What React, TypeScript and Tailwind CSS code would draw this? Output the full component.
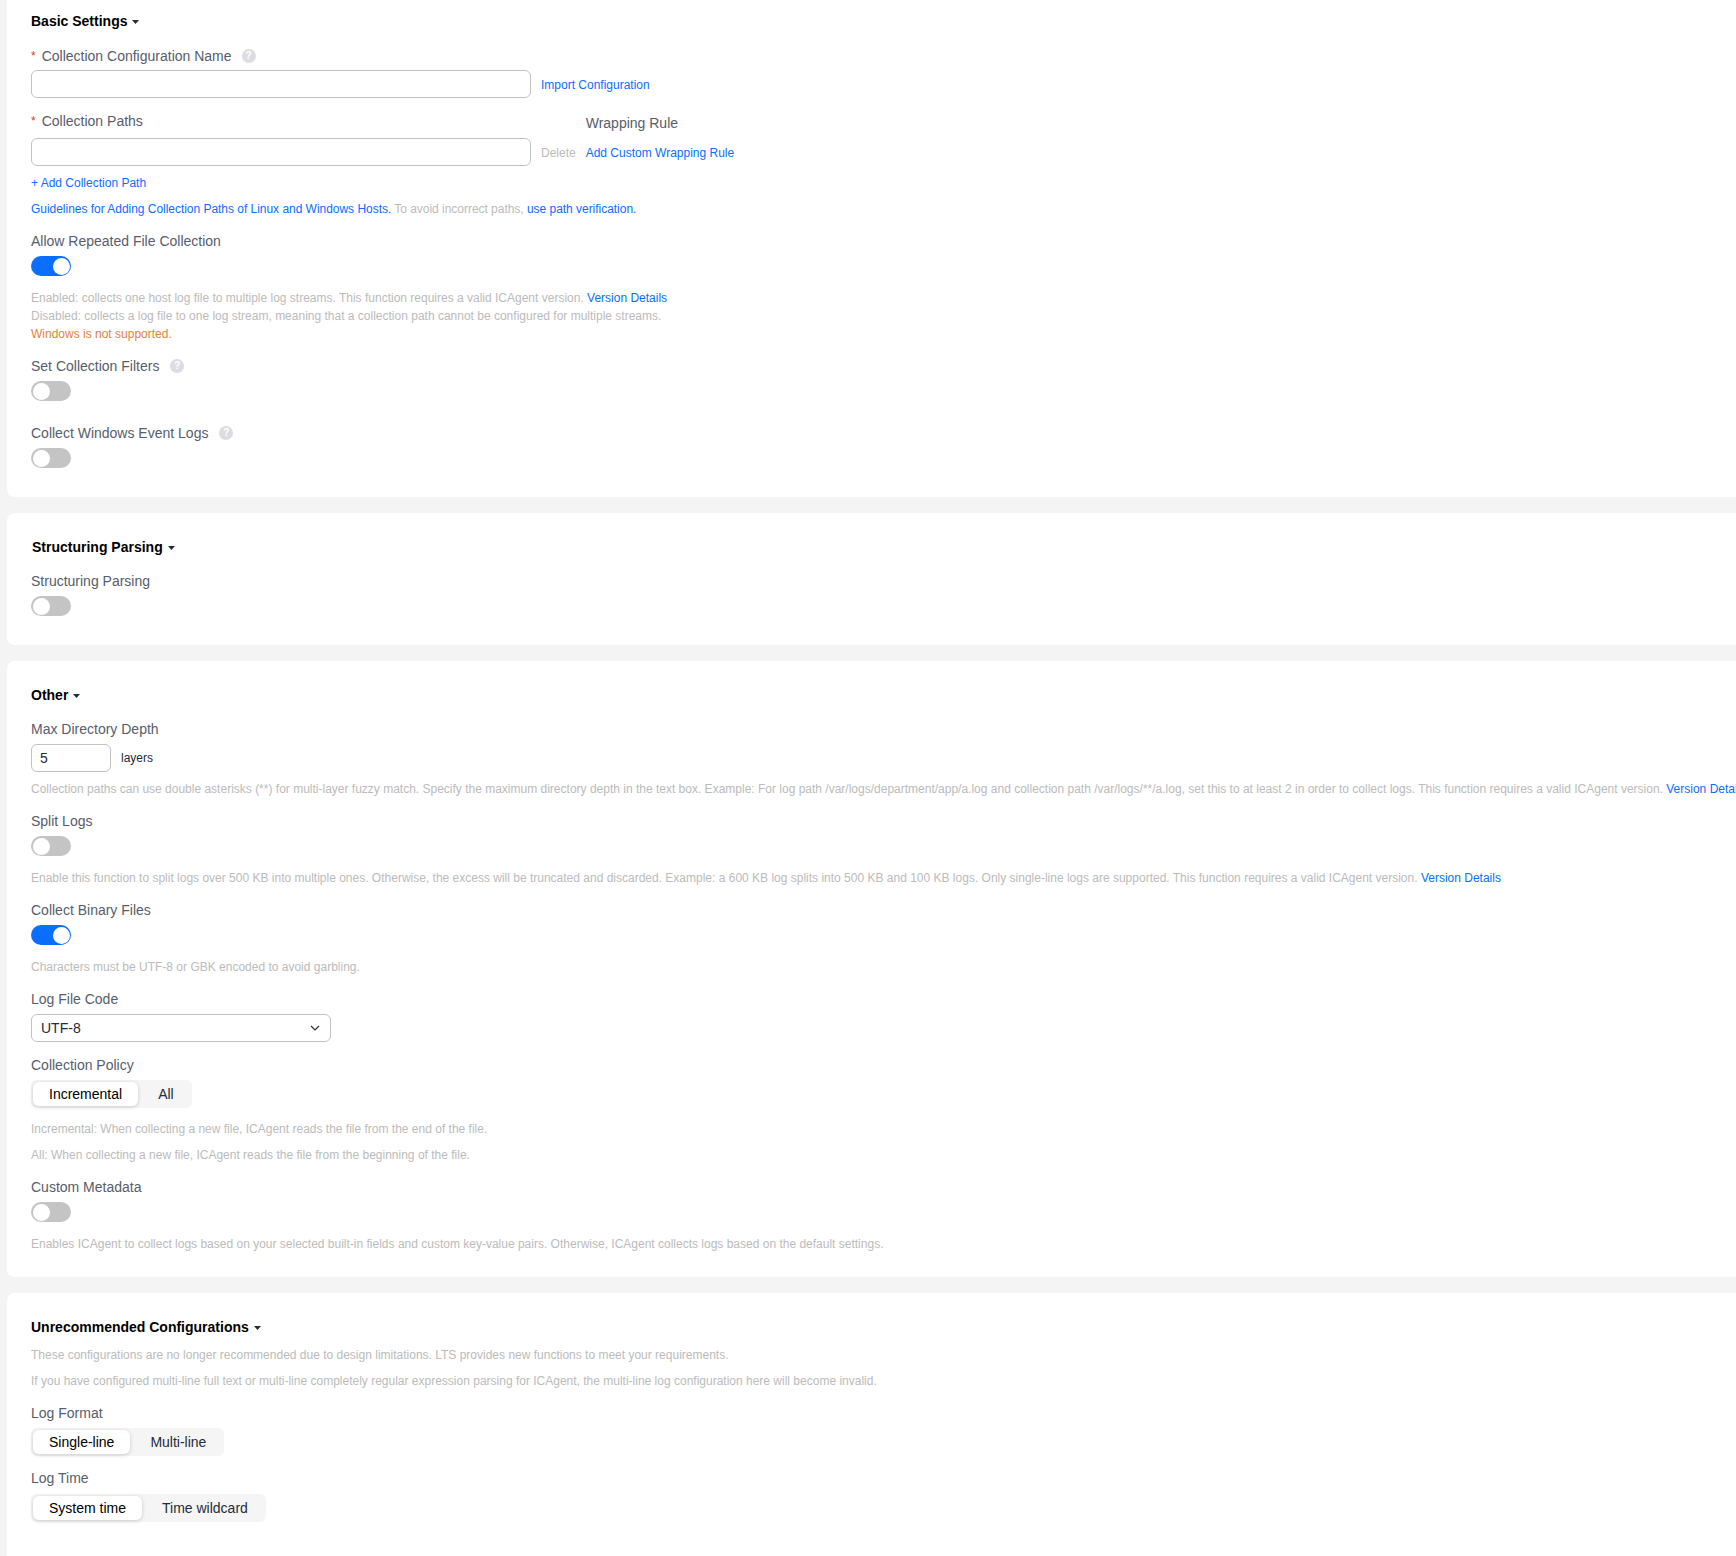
import type { ReactNode } from 'react';

function Caret() {
  return (
    <svg width="7" height="4" viewBox="0 0 7 4" className="ml-[5px] mt-[2px]">
      <path d="M0 0h7L3.5 4z" fill="#252b3a" />
    </svg>
  );
}

function Heading({ children, className = '' }: { children: ReactNode; className?: string }) {
  return (
    <div className={`flex h-5 items-center text-[14px] font-bold leading-5 text-black ${className}`}>
      {children}
      <Caret />
    </div>
  );
}

function Help({ className = '' }: { className?: string }) {
  return (
    <span className={`inline-flex h-[14px] w-[14px] items-center justify-center rounded-full bg-[#dcdce3] text-[10px] font-bold leading-none text-white ${className}`}>
      ?
    </span>
  );
}

function Label({ children, required, help, className = '' }: { children: ReactNode; required?: boolean; help?: boolean; className?: string }) {
  return (
    <div className={`flex h-5 items-center text-[14px] leading-5 text-[#575d6c] ${className}`}>
      {required && <span className="mr-[6px] text-[12px] text-[#e5352b]">*</span>}
      {children}
      {help && <Help className={required ? 'ml-[10px]' : 'ml-[11px]'} />}
    </div>
  );
}

function Toggle({ on }: { on?: boolean }) {
  return (
    <div className={`mt-[5px] flex h-5 w-10 items-center rounded-full px-[1.5px] ${on ? 'justify-end bg-[#0a6eff]' : 'justify-start bg-[#c4c4c4]'}`}>
      <div className="h-[17px] w-[17px] rounded-full bg-white" />
    </div>
  );
}

function Note({ children, className = '' }: { children: ReactNode; className?: string }) {
  return <p className={`whitespace-nowrap text-[12px] leading-[18px] text-[#bbbbbb] ${className}`}>{children}</p>;
}

function A({ children, className = '' }: { children: ReactNode; className?: string }) {
  return <a className={`text-[12px] leading-[18px] text-[#0a6eff] ${className}`}>{children}</a>;
}

function Segment({ active, other, className = 'mt-[5px]' }: { active: string; other: string; className?: string }) {
  return (
    <div className={`flex h-7 w-fit items-center rounded-md bg-[#f5f5f6] p-[2px] text-[14px] text-[#252b3a] ${className}`}>
      <div className="flex h-6 items-center rounded-md bg-white px-4 text-black shadow-[0_1px_4px_rgba(0,0,0,0.18)]">{active}</div>
      <div className="flex h-6 items-center pl-5 pr-4">{other}</div>
    </div>
  );
}

function TextBox({ className = '', value }: { className?: string; value?: string }) {
  return <input defaultValue={value} className={`h-7 rounded-md border border-[#c2c2c2] bg-white px-2 text-[14px] text-[#252b3a] outline-none ${className}`} />;
}

export default function App() {
  return (
    <div className="h-[1556px] w-[1736px] overflow-hidden bg-[#f4f4f4] pl-[7px] font-['Liberation_Sans',Arial,sans-serif]">
      <div className="flex w-[1760px] flex-col gap-4">
        <section className="rounded-b-lg bg-white pb-[29px] pl-6 pt-[11px]">
          <Heading>Basic Settings</Heading>
          <Label required help className="mt-[15px]">
            Collection Configuration Name
          </Label>
          <div className="mt-1 flex items-center">
            <TextBox className="w-[500px]" />
            <A className="ml-[10px] mt-[2px]">Import Configuration</A>
          </div>

          <div className="mt-[13px] flex items-end">
            <div>
              <Label required>Collection Paths</Label>
              <TextBox className="mt-[7px] block w-[500px]" />
            </div>
            <span className="mb-1 ml-[10px] text-[12px] leading-[18px] text-[#bbbbbb]">Delete</span>
            <div className="ml-[10px]">
              <div className="-mt-px h-5 text-[14px] leading-5 text-[#575d6c]">Wrapping Rule</div>
              <A className="mb-1 mt-[11px] block">Add Custom Wrapping Rule</A>
            </div>
          </div>

          <A className="mt-2 block">+ Add Collection Path</A>
          <Note className="mt-2 tracking-[-0.03px]">
            <A>Guidelines for Adding Collection Paths of Linux and Windows Hosts.</A> To avoid incorrect paths, <A>use path verification.</A>
          </Note>

          <Label className="mt-[13px]">Allow Repeated File Collection</Label>
          <Toggle on />
          <div className="mt-[13px]">
            <Note>
              Enabled: collects one host log file to multiple log streams. This function requires a valid ICAgent version. <A>Version Details</A>
            </Note>
            <Note>Disabled: collects a log file to one log stream, meaning that a collection path cannot be configured for multiple streams.</Note>
            <Note className="text-[#e8813a]">Windows is not supported.</Note>
          </div>

          <Label help className="mt-[13px]">
            Set Collection Filters
          </Label>
          <Toggle />
          <Label help className="mt-[22px]">
            Collect Windows Event Logs
          </Label>
          <Toggle />
        </section>

        <section className="rounded-lg bg-white pb-[29px] pl-6 pt-6">
          <Heading className="pl-px">Structuring Parsing</Heading>
          <Label className="mt-[14px]">Structuring Parsing</Label>
          <Toggle />
        </section>

        <section className="rounded-lg bg-white pb-6 pl-6 pt-6">
          <Heading>Other</Heading>
          <Label className="mt-[14px]">Max Directory Depth</Label>
          <div className="mt-[5px] flex items-center">
            <TextBox className="w-20" value="5" />
            <span className="ml-[10px] text-[12px] text-[#252b3a]">layers</span>
          </div>
          <Note className="mt-2">
            Collection paths can use double asterisks (**) for multi-layer fuzzy match. Specify the maximum directory depth in the text box. Example: For log path /var/logs/department/app/a.log and collection path /var/logs/**/a.log, set this to at least 2 in order to collect logs. This function requires a valid ICAgent version. <A>Version Details</A>
          </Note>

          <Label className="mt-[13px]">Split Logs</Label>
          <Toggle />
          <Note className="mt-[13px]">
            Enable this function to split logs over 500 KB into multiple ones. Otherwise, the excess will be truncated and discarded. Example: a 600 KB log splits into 500 KB and 100 KB logs. Only single-line logs are supported. This function requires a valid ICAgent version. <A>Version Details</A>
          </Note>

          <Label className="mt-[13px]">Collect Binary Files</Label>
          <Toggle on />
          <Note className="mt-[13px]">Characters must be UTF-8 or GBK encoded to avoid garbling.</Note>

          <Label className="mt-[13px]">Log File Code</Label>
          <div className="mt-[5px] flex h-7 w-[300px] items-center justify-between rounded-md border border-[#c2c2c2] px-[9px] text-[14px] text-[#252b3a]">
            UTF-8
            <svg width="10" height="6" viewBox="0 0 10 6" fill="none" className="mr-px">
              <path d="M1 1l4 4 4-4" stroke="#252b3a" strokeWidth="1.1" />
            </svg>
          </div>

          <Label className="mt-[13px]">Collection Policy</Label>
          <Segment active="Incremental" other="All" />
          <Note className="mt-3">Incremental: When collecting a new file, ICAgent reads the file from the end of the file.</Note>
          <Note className="mt-2">All: When collecting a new file, ICAgent reads the file from the beginning of the file.</Note>

          <Label className="mt-[13px]">Custom Metadata</Label>
          <Toggle />
          <Note className="mt-[13px]">Enables ICAgent to collect logs based on your selected built-in fields and custom key-value pairs. Otherwise, ICAgent collects logs based on the default settings.</Note>
        </section>

        <section className="rounded-t-lg bg-white pb-10 pl-6 pt-6">
          <Heading>Unrecommended Configurations</Heading>
          <Note className="mt-[9px]">These configurations are no longer recommended due to design limitations. LTS provides new functions to meet your requirements.</Note>
          <Note className="mt-2">If you have configured multi-line full text or multi-line completely regular expression parsing for ICAgent, the multi-line log configuration here will become invalid.</Note>
          <Label className="mt-[13px]">Log Format</Label>
          <Segment active="Single-line" other="Multi-line" />
          <Label className="mt-3">Log Time</Label>
          <Segment active="System time" other="Time wildcard" className="mt-[6px]" />
        </section>
      </div>
    </div>
  );
}
